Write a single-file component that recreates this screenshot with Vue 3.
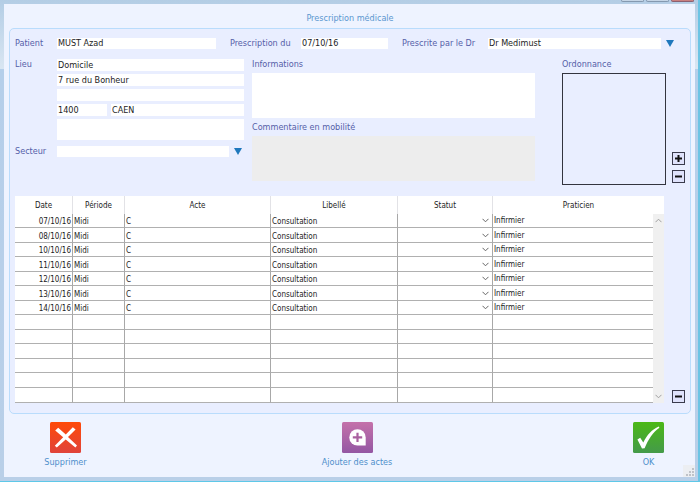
<script setup>
import { ref } from 'vue'

const patient = ref('MUST Azad')
const prescriptionDate = ref('07/10/16')
const doctor = ref('Dr Medimust')
const place = ref({
  name: 'Domicile',
  street: '7 rue du Bonheur',
  street2: '',
  zip: '1400',
  city: 'CAEN',
  notes: ''
})
const sector = ref('')
const infos = ref('')
const comment = ref('')

const dates = ['07/10/16', '08/10/16', '10/10/16', '11/10/16', '12/10/16', '13/10/16', '14/10/16']

const rows = ref(dates.map((date) => ({
  date,
  period: 'Midi',
  act: 'C',
  label: 'Consultation',
  status: '',
  nurse: 'Infirmier'
})))

const emptyRows = 6
</script>

<template>
  <div class="window">
    <div class="window-controls">
      <span class="control"></span>
      <span class="control"></span>
      <span class="control close"></span>
    </div>

    <main class="dialog">
      <h1 class="title">Prescription médicale</h1>

      <section class="panel">
        <div class="top-row">
          <label for="patient">Patient</label>
          <input id="patient" v-model="patient" type="text" />
          <label for="date">Prescription du</label>
          <input id="date" v-model="prescriptionDate" type="text" />
          <label for="doctor">Prescrite par le Dr</label>
          <div class="dropdown">
            <select id="doctor" v-model="doctor">
              <option>Dr Medimust</option>
            </select>
            <svg class="triangle" viewBox="0 0 8 7"><path d="M0 0H8L4 7Z" /></svg>
          </div>
        </div>

        <div class="details">
          <div class="place">
            <label for="place">Lieu</label>
            <div class="address">
              <input id="place" v-model="place.name" type="text" />
              <input v-model="place.street" type="text" aria-label="Adresse" />
              <input v-model="place.street2" type="text" aria-label="Complément" />
              <div class="city">
                <input v-model="place.zip" type="text" aria-label="Code postal" />
                <input v-model="place.city" type="text" aria-label="Ville" />
              </div>
              <textarea v-model="place.notes" aria-label="Notes"></textarea>
            </div>
            <label for="sector">Secteur</label>
            <div class="dropdown">
              <select id="sector" v-model="sector">
                <option value=""></option>
              </select>
              <svg class="triangle" viewBox="0 0 8 7"><path d="M0 0H8L4 7Z" /></svg>
            </div>
          </div>

          <div class="notes">
            <label for="infos">Informations</label>
            <textarea id="infos" v-model="infos"></textarea>
            <label for="comment">Commentaire en mobilité</label>
            <textarea id="comment" v-model="comment" class="readonly" readonly></textarea>
          </div>

          <div class="document">
            <span class="caption">Ordonnance</span>
            <div class="preview"></div>
          </div>

          <div class="side">
            <button type="button" class="square" aria-label="Ajouter une ordonnance">
              <svg viewBox="0 0 11 11"><path d="M2 5.5H9M5.5 2V9" /></svg>
            </button>
            <button type="button" class="square" aria-label="Retirer une ordonnance">
              <svg viewBox="0 0 11 11"><path d="M2 5.5H9" /></svg>
            </button>
          </div>
        </div>

        <div class="acts">
          <div class="table-box">
            <table>
              <colgroup>
                <col class="col-date" />
                <col class="col-period" />
                <col />
                <col class="col-label" />
                <col class="col-status" />
                <col class="col-nurse" />
              </colgroup>
              <thead>
                <tr>
                  <th>Date</th>
                  <th>Période</th>
                  <th>Acte</th>
                  <th>Libellé</th>
                  <th>Statut</th>
                  <th class="last">Praticien</th>
                </tr>
              </thead>
              <tbody>
                <tr v-for="row in rows" :key="row.date">
                  <td class="date">{{ row.date }}</td>
                  <td>{{ row.period }}</td>
                  <td>{{ row.act }}</td>
                  <td>{{ row.label }}</td>
                  <td class="status">
                    <div class="status-box">
                      <select v-model="row.status" :aria-label="'Statut ' + row.date">
                        <option value=""></option>
                      </select>
                      <svg class="chevron" viewBox="0 0 7 5"><path d="M0.5 0.8L3.5 3.8L6.5 0.8" /></svg>
                    </div>
                  </td>
                  <td class="last nurse">{{ row.nurse }}</td>
                </tr>
                <tr v-for="n in emptyRows" :key="'empty' + n">
                  <td v-for="c in 6" :key="c" :class="{ last: c === 6 }"></td>
                </tr>
              </tbody>
            </table>
            <div class="scrollbar">
              <button type="button" aria-label="Monter">
                <svg viewBox="0 0 7 5"><path d="M0.5 4.2L3.5 1.2L6.5 4.2" /></svg>
              </button>
              <button type="button" aria-label="Descendre">
                <svg viewBox="0 0 7 5"><path d="M0.5 0.8L3.5 3.8L6.5 0.8" /></svg>
              </button>
            </div>
          </div>
          <button type="button" class="square" aria-label="Retirer un acte">
            <svg viewBox="0 0 11 11"><path d="M2 5.5H9" /></svg>
          </button>
        </div>
      </section>

      <footer class="actions">
        <button type="button" class="action">
          <svg viewBox="0 0 31 31">
            <defs>
              <linearGradient id="red" x1="0" y1="0" x2="0" y2="1">
                <stop offset="0" stop-color="#ff4a08" />
                <stop offset="1" stop-color="#e0433a" />
              </linearGradient>
            </defs>
            <rect width="31" height="31" rx="1.5" fill="url(#red)" />
            <path d="M5.2 8.4L8.2 5.8L15.8 12.6L22.8 5.2L25.6 7.6L18 14.9L27 23.4L25.4 25.4L15.7 17.4L6.8 25.6L4.8 23.8L13.2 15.2Z" fill="#fff" />
          </svg>
          <span>Supprimer</span>
        </button>
        <button type="button" class="action">
          <svg viewBox="0 0 31 31">
            <defs>
              <linearGradient id="purple" x1="0" y1="0" x2="0" y2="1">
                <stop offset="0" stop-color="#c471aa" />
                <stop offset="1" stop-color="#9457a3" />
              </linearGradient>
            </defs>
            <rect width="31" height="31" rx="1.5" fill="url(#purple)" />
            <path d="M15.5 7.2A8.2 8.2 0 0 1 23.7 15.4V23.6H15.5A8.2 8.2 0 0 1 15.5 7.2Z" fill="#fff" />
            <path d="M10.8 15.4H20.2M15.5 10.7V20.1" stroke="#a9619f" stroke-width="2.2" />
          </svg>
          <span>Ajouter des actes</span>
        </button>
        <button type="button" class="action">
          <svg viewBox="0 0 31 31">
            <defs>
              <linearGradient id="green" x1="0" y1="0" x2="0" y2="1">
                <stop offset="0" stop-color="#4bb816" />
                <stop offset="1" stop-color="#449a4a" />
              </linearGradient>
            </defs>
            <rect width="31" height="31" rx="1.5" fill="url(#green)" />
            <path d="M4.4 17.6L7.2 15.8L10.3 20.6C14 12.5 19 7.4 25.8 4.4L26.4 5.8C20 10.4 15.4 17.2 11.6 26.2L9 26.6Z" fill="#fff" />
          </svg>
          <span>OK</span>
        </button>
      </footer>

      <svg class="grip" viewBox="0 0 12 12">
        <rect width="12" height="12" fill="#eceef2" />
        <path d="M9 3h2v2H9zM6 6h2v2H6zM9 6h2v2H9zM3 9h2v2H3zM6 9h2v2H6zM9 9h2v2H9z" fill="#bfc2c8" />
      </svg>
    </main>
  </div>
</template>

<style>
body {
  margin: 0;
}
</style>

<style scoped>
* {
  box-sizing: border-box;
}

.window {
  position: relative;
  display: flex;
  min-height: 100vh;
  padding: 4px 3px 4px 4px;
  border-right: 2px solid #6cc4e4;
  border-bottom: 1px solid #5ec8e8;
  background: linear-gradient(#b3cde5 0, #d9e6f2 69px, #b5cfea 69px, #b9cfe8 100%);
  color: #1c1c24;
  font-family: 'DejaVu Sans Condensed', Tahoma, 'DejaVu Sans', sans-serif;
  font-size: 9px;
  line-height: 11px;
}

.window-controls {
  position: absolute;
  top: 0;
  right: 4px;
  display: flex;
  gap: 2px;
}

.control {
  width: 23px;
  height: 2px;
  border: 1px solid #8499b0;
  border-top: 0;
  border-radius: 0 0 2px 2px;
  background: #c5d5e6;
}

.control.close {
  border-color: #8c6070;
  background: #c98080;
}

.dialog {
  position: relative;
  flex: 1;
  display: flex;
  flex-direction: column;
  padding: 8px 4px 8px 5px;
  background: #eef3ff;
}

.title {
  margin: 0 0 4px;
  color: #5b97d0;
  font-size: 9px;
  font-weight: normal;
  line-height: 12px;
  text-align: center;
}

.panel {
  padding: 9px 5px 10px;
  border: 1px solid #b9dcfc;
  border-radius: 5px;
  background: #e9eeff;
}

label,
.caption {
  color: #5560a8;
}

input,
select,
textarea {
  display: block;
  width: 100%;
  min-width: 0;
  height: 11px;
  margin: 0;
  padding: 0 1px;
  border: 0;
  border-radius: 0;
  outline: 0;
  background: #fff;
  color: inherit;
  font: inherit;
  appearance: none;
  resize: none;
}

button {
  margin: 0;
  padding: 0;
  border: 0;
  background: none;
  font: inherit;
  cursor: pointer;
}

svg {
  display: block;
}

.top-row {
  display: grid;
  grid-template-columns: 42px 159fr 85px 87fr 100px 186fr;
  padding-right: 11px;
}

.top-row label:not(:first-child) {
  padding-left: 14px;
}

.dropdown {
  display: flex;
  align-items: center;
  gap: 5px;
}

.triangle {
  flex: none;
  width: 8px;
  height: 7px;
  fill: #1f78bd;
}

.details {
  display: grid;
  grid-template-columns: 237fr 310fr 104px 19px;
  margin-top: 10px;
}

.place {
  display: grid;
  grid-template-columns: 42px 1fr;
  row-gap: 6px;
  align-content: start;
  padding-right: 8px;
}

.place .dropdown {
  padding-right: 2px;
}

.address {
  display: flex;
  flex-direction: column;
  gap: 3px;
}

.address input {
  height: 12px;
}

.address textarea {
  height: 21px;
}

.city {
  display: grid;
  grid-template-columns: 50fr 133fr;
  gap: 4px;
}

.notes {
  display: flex;
  flex-direction: column;
  padding-right: 27px;
}

.notes textarea {
  height: 45px;
  margin: 3px 0 4px;
}

.notes .readonly {
  margin-bottom: 0;
  background: #ededed;
}

.document {
  display: flex;
  flex-direction: column;
}

.preview {
  height: 112px;
  margin-top: 3px;
  border: 1px solid #33343f;
}

.side {
  display: flex;
  flex-direction: column;
  align-items: flex-end;
  justify-content: flex-end;
  gap: 5px;
  padding-bottom: 2px;
}

.square {
  flex: none;
  width: 13px;
  height: 13px;
  border: 1px solid #3a3b4c;
  background: #dfe2fb;
}

.square svg {
  width: 11px;
  height: 11px;
  fill: none;
  stroke: #111;
  stroke-width: 2;
}

.acts {
  display: flex;
  align-items: flex-end;
  gap: 8px;
  margin-top: 11px;
}

.table-box {
  position: relative;
  flex: 1;
  background: #fff;
}

table {
  width: 100%;
  border-collapse: separate;
  border-spacing: 0;
  table-layout: fixed;
  font-size: 8px;
}

.col-date { width: 58px; }
.col-period { width: 52px; }
.col-label { width: 127px; }
.col-status { width: 95px; }
.col-nurse { width: 171px; }

th {
  height: 18px;
  padding: 2px 0 0;
  border-right: 1px solid #e2e2e6;
  font-weight: normal;
  line-height: 10px;
}

td {
  height: 14px;
  padding: 3px 1px 0;
  border-right: 1px solid #a8a8a8;
  border-bottom: 1px solid #b0b0b0;
  line-height: 10px;
}

tr:nth-child(even) td,
tr:last-child td {
  height: 15px;
}

th.last,
td.last {
  border-right: 0;
}

td.date {
  text-align: right;
}

td.nurse {
  padding-top: 1px;
}

td.status {
  padding: 0;
}

.status-box {
  display: grid;
  align-items: center;
}

.status-box > * {
  grid-area: 1 / 1;
}

.status-box select {
  background: none;
}

.chevron {
  justify-self: end;
  width: 7px;
  height: 5px;
  margin-right: 3px;
  fill: none;
  stroke: #666;
  pointer-events: none;
}

.scrollbar {
  position: absolute;
  top: 18px;
  right: 0;
  bottom: 0;
  display: flex;
  flex-direction: column;
  justify-content: space-between;
  width: 11px;
  padding: 4px 2px;
  background: #f0f0f0;
}

.scrollbar svg {
  width: 7px;
  height: 5px;
  fill: none;
  stroke: #a0a0a0;
}

.actions {
  display: flex;
  justify-content: space-between;
  margin-top: 8px;
  padding: 0 6px 0 20px;
}

.action {
  display: flex;
  flex-direction: column;
  align-items: center;
  gap: 4px;
  width: 73px;
  color: #4f8fcb;
  white-space: nowrap;
}

.action svg {
  width: 31px;
  height: 31px;
}

.grip {
  position: absolute;
  right: 0;
  bottom: 0;
  width: 12px;
  height: 12px;
}
</style>
